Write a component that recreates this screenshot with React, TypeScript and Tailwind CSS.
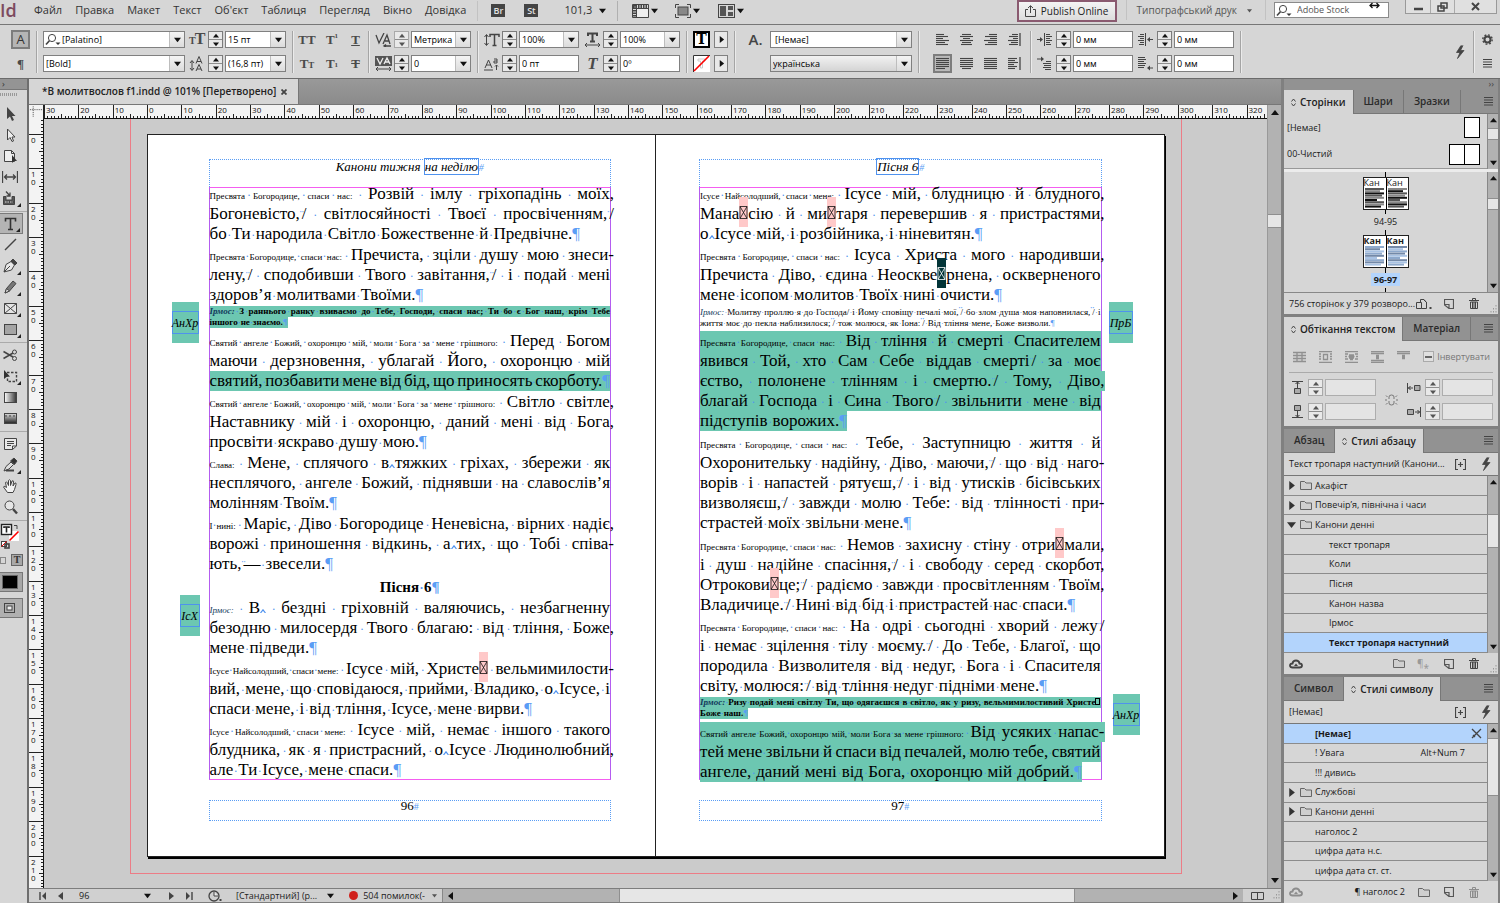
import { Fragment, type ReactNode } from "react";
import clsx from "clsx";

/* ── Page text ──
   |  ends the small lead-in      ¨  thin non-breaking space
   ^  zero-width break            □  glyph missing from the font
   ■  missing glyph, selected     ▯  missing glyph in small text */

type Para = {
  kind: "verse" | "irmos" | "title";
  lines: string[];
  marked?: number[];
  light?: boolean;
};

const leftText: Para[] = [
  { kind: "verse", lines: ["Пресвята Богородице, спаси нас:|Розвій імлу гріхопадінь моїх,", "Богоневісто,¨/ світлосяйності Твоєї просвіченням,¨/", "бо Ти народила Світло Божественне й Предвічне.¶"] },
  { kind: "verse", lines: ["Пресвята Богородице, спаси нас:|Пречиста, зціли душу мою знеси-", "лену,¨/ сподобивши Твого завітання,¨/ і подай мені", "здоров’я молитвами Твоїми.¶"] },
  { kind: "irmos", marked: [0, 1], lines: ["Ірмос:|З раннього ранку взиваємо до Тебе, Господи, спаси нас; Ти бо є Бог наш, крім Тебе", "іншого не знаємо.¶"] },
  { kind: "verse", marked: [2], lines: ["Святий ангеле Божий, охоронцю мій, моли Бога за мене грішного:|Перед Богом", "маючи дерзновення, ублагай Його, охоронцю мій", "святий, позбавити мене від бід, що приносять скорботу.¶"] },
  { kind: "verse", lines: ["Святий ангеле Божий, охоронцю мій, моли Бога за мене грішного:|Світло світле,", "Наставнику мій і охоронцю, даний мені від Бога,", "просвіти яскраво душу мою.¶"] },
  { kind: "verse", lines: ["Слава:|Мене, сплячого в^тяжких гріхах, збережи як", "несплячого, ангеле Божий, піднявши на славослів’я", "молінням Твоїм.¶"] },
  { kind: "verse", lines: ["І нині:|Маріє, Діво Богородице Неневісна, вірних надіє,", "ворожі приношення відкинь, а^тих, що Тобі співа-", "ють,¨— звесели.¶"] },
  { kind: "title", lines: ["Пісня 6¶"] },
  { kind: "verse", lines: ["Ірмос:|В^ бездні гріховній валяючись, незбагненну", "безодню милосердя Твого благаю: від тління, Боже,", "мене підведи.¶"] },
  { kind: "verse", lines: ["Ісусе Найсолодший, спаси мене:|Ісусе мій, Христе□ вельмимилости-", "вий, мене, що сповідаюся, прийми, Владико, о^Ісусе, і", "спаси мене, і від тління, Ісусе, мене вирви.¶"] },
  { kind: "verse", lines: ["Ісусе Найсолодший, спаси мене:|Ісусе мій, немає іншого такого", "блудника, як я пристрасний, о^Ісусе Людинолюбний,", "але Ти Ісусе, мене спаси.¶"] },
];

const rightText: Para[] = [
  { kind: "verse", lines: ["Ісусе Найсолодший, спаси мене:|Ісусе мій, блудницю й блудного,", "Мана□сію й ми□таря перевершив я пристрастями,", "о^Ісусе мій, і розбійника, і ніневитян.¶"] },
  { kind: "verse", lines: ["Пресвята Богородице, спаси нас:|Ісуса Христа мого народивши,", "Пречиста Діво, єдина Неоскве■рнена, оскверненого", "мене ісопом молитов Твоїх нині очисти.¶"] },
  { kind: "irmos", light: true, lines: ["Ірмос:|Молитву проллю я до Господа/ і Йому сповіщу печалі мої,¨/ бо злом душа моя наповнилася,¨/ і", "життя моє до пекла наблизилося;¨/ тож молюся, як Іона:¨/ Від тління мене, Боже визволи.¶"] },
  { kind: "verse", marked: [0, 1, 2, 3, 4], lines: ["Пресвята Богородице, спаси нас:|Від тління й смерті Спасителем", "явився Той, хто Сам Себе віддав смерті¨/ за моє", "єство, полонене тлінням і смертю.¨/ Тому, Діво,", "благай Господа і Сина Твого¨/ звільнити мене від", "підступів ворожих.¶"] },
  { kind: "verse", lines: ["Пресвята Богородице, спаси нас:|Тебе, Заступницю життя й", "Охоронительку надійну, Діво, маючи,¨/ що від наго-", "ворів і напастей рятуєш,¨/ і від утисків бісівських", "визволяєш,¨/ завжди молю Тебе: від тлінності при-", "страстей моїх звільни мене.¶"] },
  { kind: "verse", lines: ["Пресвята Богородице, спаси нас:|Немов захисну стіну отри□мали,", "і душ надійне спасіння,¨/ і свободу серед скорбот,", "Отрокови□це;¨/ радіємо завжди просвітленням Твоїм,", "Владичице.¨/ Нині від бід і пристрастей нас спаси.¶"] },
  { kind: "verse", lines: ["Пресвята Богородице, спаси нас:|На одрі сьогодні хворий лежу¨/", "і немає зцілення тілу моєму.¨/ До Тебе, Благої, що", "породила Визволителя від недуг, Бога і Спасителя", "світу, молюся:¨/ від тління недуг підніми мене.¶"] },
  { kind: "irmos", marked: [0, 1], lines: ["Ірмос:|Ризу подай мені світлу Ти, що одягаєшся в світло, як у ризу, вельмимилостивий Христе▯", "Боже наш.¶"] },
  { kind: "verse", marked: [0, 1, 2], lines: ["Святий ангеле Божий, охоронцю мій, моли Бога за мене грішного:|Від усяких напас-", "тей мене звільни й спаси від печалей, молю тебе, святий", "ангеле, даний мені від Бога, охоронцю мій добрий.¶"] },
];

function MissingGlyph({ selected }: { selected?: boolean }) {
  const ink = selected ? "#fff" : "#111";
  return (
    <svg viewBox="0 0 9 30" className="-mt-2 -mb-[2px] inline-block h-[30px] w-[9px] align-middle">
      <rect width="9" height="30" fill={selected ? "#023437" : "#ffc9c9"} />
      <path d="M1 9.5H8V21.5H1ZM1 9.5L8 21.5M8 9.5L1 21.5" fill="none" stroke={ink} strokeWidth="0.8" />
    </svg>
  );
}

function Word({ text }: { text: string }) {
  return (
    <>
      {text.split(/([□■▯^¨¶#])/).map((part, i) => {
        if (part === "□") return <MissingGlyph key={i} />;
        if (part === "■") return <MissingGlyph key={i} selected />;
        if (part === "▯") return <span key={i} className="inline-block h-[7px] w-[5px] border border-black" />;
        if (part === "^") return (
          <svg key={i} viewBox="0 0 6 4" className="inline-block h-1 w-[6px] align-baseline"><path d="M.5 4L3 .8L5.500 4" fill="none" stroke="#4f92ee" strokeWidth="1.2" /></svg>
        );
        if (part === "¨") return <span key={i} className="inline-block w-[2px] text-[12px] text-[#5a9df5]">¨</span>;
        if (part === "¶" || part === "#") return <span key={i} className="text-[#5a9df5]">{part}</span>;
        return <Fragment key={i}>{part}</Fragment>;
      })}
    </>
  );
}

const lineStyle = {
  verse: "h-5 text-[17px] leading-5",
  irmos: "h-[11px] text-[9px] leading-[11px]",
  title: "mt-[3px] h-5 justify-center text-[15px] leading-5 font-bold",
};

function TextLine({ text, kind, marked, light }: { text: string; kind: Para["kind"]; marked: boolean; light?: boolean }) {
  const [lead, main] = text.includes("|") ? text.split("|") : ["", text];
  const last = text.endsWith("¶");
  const words = [
    ...(lead ? lead.split(" ").map((w) => ({ w, small: true })) : []),
    ...main.split(" ").map((w) => ({ w, small: false })),
  ];
  return (
    <div
      className={clsx(
        "flex items-baseline whitespace-nowrap",
        lineStyle[kind],
        kind === "irmos" && !light && "font-bold",
        marked && "bg-[#6cc7b1]",
        last && kind !== "title" && "w-fit max-w-full",
        !last && /[,\-/]$/.test(text) && "-mr-1",
      )}
    >
      {words.map(({ w, small }, i) => (
        <Fragment key={i}>
          {i > 0 && (
            <span
              className={clsx(
                "flex min-w-0 justify-center text-[#4f92ee]",
                kind === "irmos" ? "text-[8px]" : "text-[12px]",
                last ? (kind === "irmos" ? "w-[3px]" : "w-[5px]") : small ? "w-0 grow" : "w-0 grow-2",
              )}
            >
              ·
            </span>
          )}
          <span
            className={clsx(
              "shrink-0",
              small && kind === "verse" && "text-[9px]",
              small && w.startsWith("Ірмос") && "italic text-[#123a5c]",
            )}
          >
            <Word text={w} />
          </span>
        </Fragment>
      ))}
    </div>
  );
}

function SideMark({ text, className }: { text: string; className: string }) {
  return (
    <div className={clsx("absolute flex h-[41px] items-center justify-center bg-[#6cc7b1]", className)}>
      <span className="flex h-[23px] w-full items-center justify-center border border-[#4f92ee] text-[12px] italic">
        {text}
      </span>
    </div>
  );
}

function DocPage({ heading, boxed, folio, paras, className, children }: {
  heading: string; boxed: string; folio: string; paras: Para[]; className: string; children: ReactNode;
}) {
  return (
    <article className={clsx("relative min-w-0 flex-1 bg-white pt-6 pb-[35px] font-['Liberation_Serif',serif] text-black", className)}>
      <header className="h-7 border border-b-0 border-dotted border-[#5a9df5] text-center text-[13px] leading-[14px] italic">
        {heading} <span className="border border-[#4f92ee]">{boxed}</span>
        <span className="text-[10px] text-[#5a9df5]">#</span>
      </header>
      <div className="h-[593px] border border-[#f45df0] border-x-[#b45cf0]">
        <div className="-mt-1">
          {paras.map((p, i) => (
            <div key={i} className={clsx(p.kind === "irmos" ? "mb-[3px]" : p.lines.length > 4 ? "mb-[2px]" : "mb-px")}>
              {p.lines.map((line, n) => (
                <TextLine key={n} text={line} kind={p.kind} light={p.light} marked={!!p.marked?.includes(n)} />
              ))}
            </div>
          ))}
        </div>
      </div>
      <footer className="mt-5 h-[21px] border border-dotted border-[#5a9df5] text-center text-[13px] leading-[9px]">
        {folio}<span className="text-[10px] text-[#5a9df5]">#</span>
      </footer>
      {children}
    </article>
  );
}

/* ── Rulers: 10 mm = 34.36 px at this zoom ── */

const MM = 3.436;
const range = (from: number, to: number) => Array.from({ length: to - from + 1 }, (_, i) => from + i);
const tickSize = (mm: number, full: number) => (mm % 10 === 0 ? full : mm % 5 === 0 ? 5 : 3);

const hTicks = range(-30, 330).map((mm) => `M${Math.round(103 + mm * MM) + 0.5} 14V${14 - tickSize(mm, 14)}`).join("");
const vTicks = range(-5, 225).map((mm) => `M15 ${Math.round(15 + mm * MM) + 0.5}H${15 - tickSize(mm, 15)}`).join("");

function TopRuler() {
  return (
    <svg className="h-[14px] w-full min-w-0 flex-1 bg-[#f3f3f3] font-['Open_Sans',sans-serif] text-[8px]">
      <path d={hTicks} stroke="#222" />
      {range(-3, 33).map((n) => (
        <text key={n} x={105 + n * 10 * MM} y="8" fill="#111">{Math.abs(n * 10)}</text>
      ))}
      <path d="M0 13.5H2000" stroke="#111" />
    </svg>
  );
}

function SideRuler() {
  return (
    <svg className="h-full w-[15px] shrink-0 bg-[#f3f3f3] font-['Open_Sans',sans-serif] text-[8px]">
      <path d={vTicks} stroke="#222" />
      {range(0, 21).map((n) =>
        String(n * 10).split("").map((d, i) => (
          <text key={`${n}-${i}`} x="2" y={24 + n * 10 * MM + i * 8} fill="#111">{d}</text>
        )),
      )}
      <path d="M14.5 0V2000" stroke="#111" />
    </svg>
  );
}

/* ── Small controls ── */

function Svg({ w = 16, h = 16, children, className }: { w?: number; h?: number; children: ReactNode; className?: string }) {
  return (
    <svg width={w} height={h} viewBox={`0 0 ${w} ${h}`} fill="none" stroke="#444" aria-hidden className={clsx("shrink-0", className)}>
      {children}
    </svg>
  );
}

function Tri({ dir = "down", size = 7, color = "#111" }: { dir?: "up" | "down" | "left" | "right"; size?: number; color?: string }) {
  const d = { up: "M0 6H8L4 1Z", down: "M0 2H8L4 7Z", left: "M6 0V8L1 4Z", right: "M2 0V8L7 4Z" }[dir];
  return (
    <svg width={size} height={size} viewBox="0 0 8 8" aria-hidden className="shrink-0"><path d={d} fill={color} /></svg>
  );
}

function Spin({ label, dim }: { label: string; dim?: boolean }) {
  const color = dim ? "#555" : "#111";
  return (
    <span className={clsx("flex h-[17px] w-[15px] shrink-0 flex-col border bg-[#e9e9e9]", dim ? "border-[#a9a9a9]" : "border-[#7c7c7c]")}>
      <button aria-label={`${label} +`} className="flex flex-1 items-center justify-center border-b border-[#8d8d8d]"><Tri dir="up" size={6} color={color} /></button>
      <button aria-label={`${label} −`} className="flex flex-1 items-center justify-center"><Tri size={6} color={color} /></button>
    </span>
  );
}

function Combo({ label, value, className, search, grey }: { label: string; value: string; className: string; search?: boolean; grey?: boolean }) {
  return (
    <label className={clsx("relative flex h-[17px] items-center border border-[#808080]", grey ? "bg-gradient-to-b from-[#f2f2f2] to-[#d4d4d4]" : "bg-white", className)}>
      {search && <SearchGlyph />}
      <select aria-label={label} defaultValue={value} className={clsx("h-full w-full appearance-none bg-transparent text-[9px] leading-[15px] text-black outline-none", search ? "pl-px" : "pl-[2px]")}>
        <option>{value}</option>
      </select>
      <span className="pointer-events-none absolute inset-y-0 right-0 flex w-[15px] items-center justify-center border-l border-[#bdbdbd] bg-gradient-to-b from-[#f4f4f4] to-[#dcdcdc]"><Tri size={7} /></span>
    </label>
  );
}

function Field({ label, value = "", className, dim }: { label: string; value?: string; className?: string; dim?: boolean }) {
  return (
    <input
      aria-label={label}
      defaultValue={value}
      className={clsx("h-[17px] min-w-0 border px-[2px] text-[9px] text-black outline-none", dim ? "border-[#adadad] bg-[#e4e4e4]" : "border-[#808080] bg-white", className)}
    />
  );
}

function SearchGlyph() {
  return (
    <Svg w={16} h={13} className="ml-px">
      <circle cx="7" cy="5" r="3.6" /><path d="M4.4 7.7L1 11.5" strokeWidth="1.6" /><path d="M10.5 9.5h5l-2.500 2.500z" fill="#333" stroke="none" />
    </Svg>
  );
}

const Sep = () => <span className="mx-[6px] h-[42px] w-px shrink-0 bg-[#a5a5a5] shadow-[1px_0_0_#ebebeb]" />;
const Pair = ({ children }: { children: ReactNode }) => <div className="flex shrink-0 flex-col gap-[7px]">{children}</div>;
const Row = ({ children, className }: { children: ReactNode; className?: string }) => <div className={clsx("flex h-[17px] items-center", className ?? "gap-[2px]")}>{children}</div>;

function GlyphButton({ label, children, className }: { label: string; children: ReactNode; className?: string }) {
  return (
    <button aria-label={label} className={clsx("flex h-[17px] items-center justify-center font-['Liberation_Serif',serif] leading-none font-bold text-[#4a4a4a]", className)}>
      {children}
    </button>
  );
}

/* text-alignment bars: each entry is [start, end] of one bar */
const aligns: Record<string, { bars: number[][]; edge?: boolean }> = {
  "За лівим краєм": { bars: [[0, 8], [0, 12], [0, 7], [0, 13], [0, 9], [0, 12]] },
  "За центром": { bars: [[2, 11], [0, 13], [3, 10], [0, 13], [2, 11], [1, 12]] },
  "За правим краєм": { bars: [[5, 13], [1, 13], [6, 13], [0, 13], [4, 13], [1, 13]] },
  "До корінця": { bars: [[4, 10], [1, 10], [5, 10], [0, 10], [3, 10], [1, 10]], edge: true },
  "За шириною, останній ліворуч": { bars: [[0, 13], [0, 13], [0, 13], [0, 13], [0, 13], [0, 9]] },
  "За шириною, останній по центру": { bars: [[0, 13], [0, 13], [0, 13], [0, 13], [0, 13], [2, 11]] },
  "За шириною": { bars: [[0, 13], [0, 13], [0, 13], [0, 13], [0, 13], [0, 13]] },
  "Від корінця": { bars: [[0, 9], [0, 7], [0, 10], [0, 6], [0, 9], [0, 7]], edge: true },
};

function AlignButton({ name, active }: { name: string; active?: boolean }) {
  const { bars, edge } = aligns[name];
  return (
    <button aria-label={name} className={clsx("flex h-[19px] w-[19px] items-center justify-center", active && "border-2 border-[#7d7d7d] bg-[#b9b9b9]")}>
      <Svg w={13} h={13}>
        {bars.map(([a, b], i) => <path key={i} d={`M${a} ${i * 2 + 1.5}H${b}`} strokeWidth="1.1" />)}
        {edge && <path d="M12 0V13" strokeWidth="1.3" />}
      </Svg>
    </button>
  );
}

function IndentIcon({ flip, low }: { flip?: boolean; low?: boolean }) {
  const up = low && !flip;
  return (
    <Svg w={15} h={15} className={flip ? "-scale-x-100" : ""}>
      {!low && <><path d="M0 7.500H4" /><path d="M3 5L6 7.500L3 10Z" fill="#444" stroke="none" /><path d="M7.500 1V14M9 2.500H13M9 4.500H15M9 6.500H13M9 8.500H15M9 10.500H13M9 12.500H14" /></>}
      {up && <><path d="M0 3H5" /><path d="M4 .5L7 3L4 5.500Z" fill="#444" stroke="none" /><path d="M9 5.500H14M6 7.500H14M7 9.500H14M6 11.500H14M8 13.500H14" /></>}
      {low && flip && <><path d="M0 12H4" /><path d="M3 9.500L6 12L3 14.500Z" fill="#444" stroke="none" /><path d="M8 1.500H15M7 3.500H15M9 5.500H15M7 7.500H15M8 9.500H15M9 11.500H15" /></>}
    </Svg>
  );
}

/* ── Top bars ── */

const menus = ["Файл", "Правка", "Макет", "Текст", "Об'єкт", "Таблиця", "Перегляд", "Вікно", "Довідка"];

function MenuBar() {
  return (
    <header className="flex h-[25px] shrink-0 items-start overflow-hidden border-b border-[#777] bg-[#d6d6d6] text-[11px] text-[#333]">
      <span className="w-[34px] text-[18px] leading-5 font-semibold text-[#7d4a5f]">Id</span>
      <nav className="flex h-[21px] items-center gap-[13px]">
        {menus.map((m) => <button key={m}>{m}</button>)}
      </nav>
      <div className="ml-[11px] flex h-[21px] items-center">
        <span className="h-5 w-px bg-[#c2c2c2]" />
        <button className="ml-[13px] h-[13px] w-[14px] bg-[#444] text-[9px] leading-[13px] font-semibold text-[#e2e2e2]">Br</button>
        <button className="ml-[19px] h-[13px] w-[14px] bg-[#444] text-[9px] leading-[13px] font-semibold text-[#e2e2e2]">St</button>
        <button className="ml-[26px] flex items-center gap-[7px]">101,3 <Tri /></button>
        <span className="ml-[11px] h-5 w-px bg-[#b0b0b0]" />
        <button aria-label="Параметри перегляду" className="ml-[14px] flex items-center gap-[2px]">
          <Svg w={17} h={14}><path d="M.5 .5H16.500V13.500H.5ZM5 4.500H16M4.500 4V13" /><path d="M1 2.500H16M2.500 1V13" strokeWidth="3" strokeDasharray="1.500 1" /><path d="M5 5H16V13H5Z" fill="#eee" stroke="none" /></Svg><Tri size={7} />
        </button>
        <button aria-label="Режим екрана" className="ml-[17px] flex items-center gap-[2px]">
          <Svg w={16} h={14}><rect x="3" y="3" width="10" height="8" fill="#888" /><path d="M.5 4V.5H4M12 .5H15.500V4M15.500 10V13.500H12M4 13.500H.5V10" /></Svg><Tri size={7} />
        </button>
        <button aria-label="Упорядкувати документи" className="ml-[18px] flex items-center gap-[2px]">
          <Svg w={17} h={14}><rect x=".5" y=".5" width="16" height="13" /><path d="M2 2H8V12H2ZM10 2H15V6H10ZM10 8H15V12H10Z" fill="#555" stroke="none" /></Svg><Tri size={7} />
        </button>
      </div>
      <div className="ml-auto flex items-start">
        <button className="flex h-[22px] w-[100px] items-center justify-center gap-[5px] border-2 border-[#8a5a70] bg-gradient-to-b from-[#f4f4f4] to-[#dcdcdc] text-[10px] text-[#222]">
          <Svg w={11} h={12}><path d="M3 4.500H.5V11.500H10.500V4.500H8M5.500 8V1M3 3L5.500 .700L8 3" /></Svg>
          Publish Online
        </button>
        <span className="ml-[9px] h-5 w-px bg-[#c2c2c2]" />
        <button className="ml-[10px] flex h-[21px] items-center gap-[10px] text-[10px] text-[#555]">Типографський друк <Tri size={5} color="#555" /></button>
        <span className="ml-[13px] h-5 w-px bg-[#c2c2c2]" />
        <label className="relative mt-[2px] ml-[8px] flex h-4 w-[115px] items-center border border-[#8a8a8a] bg-white">
          <SearchGlyph />
          <input aria-label="Пошук" placeholder="Adobe Stock" className="w-full min-w-0 bg-transparent pl-[5px] text-[9px] text-[#333] outline-none placeholder:text-[#555]" />
          <Svg w={11} h={7} className="absolute -top-px right-[8px]"><path d="M1 3.500H10M3.500 1L1 3.500L3.500 6M7.500 1L10 3.500L7.500 6" stroke="#111" strokeWidth="1.300" /></Svg>
        </label>
        <div className="mr-[3px] ml-[16px] flex h-[14px] border border-t-0 border-[#999] bg-[#e0e0e0]">
          <button aria-label="Згорнути" className="flex w-[25px] items-center justify-center border-r border-[#aaa]"><Svg w={9} h={10}><path d="M0 7H9" strokeWidth="2.500" /></Svg></button>
          <button aria-label="Відновити" className="flex w-[24px] items-center justify-center border-r border-[#aaa]"><Svg w={11} h={10}><path d="M4 1H10V6H4ZM1 4H7V9H1Z" strokeWidth="1.500" /></Svg></button>
          <button aria-label="Закрити" className="flex w-[41px] items-center justify-center"><Svg w={9} h={9}><path d="M1 1L8 8M8 1L1 8" strokeWidth="2" /></Svg></button>
        </div>
      </div>
    </header>
  );
}

function ControlBar() {
  const names = Object.keys(aligns);
  return (
    <section className="flex h-[54px] shrink-0 items-center overflow-hidden border-b border-[#6b6b6b] bg-[#d6d6d6] pr-[6px] pl-[11px]">
      <Pair>
        <button aria-label="Символ" className="-my-px flex h-[19px] w-[19px] items-center justify-center border-2 border-[#7d7d7d] bg-[#b5b5b5] text-[13px] leading-none text-[#333]">A</button>
        <GlyphButton label="Абзац" className="text-[13px]">¶</GlyphButton>
      </Pair>
      <Sep />
      <Pair>
        <Combo label="Шрифт" value="[Palatino]" className="w-[142px]" search />
        <Combo label="Накреслення" value="[Bold]" className="w-[142px]" />
      </Pair>
      <div className="ml-1"><Pair>
        <Row><span className="flex w-[17px] items-baseline font-['Liberation_Serif',serif] font-bold text-[#4a4a4a]"><span className="text-[10px]">T</span><span className="-ml-px text-[16px] leading-none">T</span></span><Spin label="Кегль" /><Combo label="Кегль" value="15 пт" className="w-[61px]" /></Row>
        <Row>
          <Svg w={17} h={16}><path d="M3 5V14M1 7L3 4.500L5 7M1 12L3 14.500L5 12" /><path d="M7 7.500L10 .500L13 7.500M8 5.500H12M7 15L10 8.500L13 15M8 13H12" /></Svg>
          <Spin label="Інтерліньяж" /><Combo label="Інтерліньяж" value="(16,8 пт)" className="w-[61px]" />
        </Row>
      </Pair></div>
      <Sep />
      <Pair>
        <Row className="gap-[9px] text-[13px]"><GlyphButton label="Усі великі" className="w-4">TT</GlyphButton><GlyphButton label="Верхній індекс" className="w-4">T<sup className="text-[7px]">1</sup></GlyphButton><GlyphButton label="Підкреслення" className="w-[13px] underline">T</GlyphButton></Row>
        <Row className="gap-[9px] text-[13px]"><GlyphButton label="Капітель" className="w-4">T<span className="pt-[3px] text-[9px]">T</span></GlyphButton><GlyphButton label="Нижній індекс" className="w-4">T<sub className="text-[7px]">1</sub></GlyphButton><GlyphButton label="Закреслення" className="w-[13px] line-through">T</GlyphButton></Row>
      </Pair>
      <Sep />
      <Pair>
        <Row><Svg w={17} h={14}><path d="M1 2L4 10L9 0M8 11L12 2L15 11M10 8H14M16 13H9M11 11.500L9 13L11 14" strokeWidth="1.300" /></Svg><Spin label="Кернінг" dim /><Combo label="Кернінг" value="Метрика" className="w-[60px]" /></Row>
        <Row><Svg w={17} h={15}><rect width="17" height="10" fill="#555" stroke="none" /><path d="M2 2L5 8L8 2M9 8L12 2L15 8M10 6H14" stroke="#eee" strokeWidth="1.300" /><path d="M1 13H16M3 11L1 13L3 15M14 11L16 13L14 15" /></Svg><Spin label="Трекінг" /><Combo label="Трекінг" value="0" className="w-[60px]" /></Row>
      </Pair>
      <Sep />
      <Pair>
        <Row><Svg w={16} h={14}><path d="M2.500 2V12M.5 4L2.500 1.500L4.500 4M.5 10L2.500 12.500L4.500 10" /><path d="M6 4V1.500H15V4M10.500 1.500V12.500M8.500 12.500H12.500" strokeWidth="1.500" /></Svg><Spin label="Масштаб по вертикалі" /><Combo label="Масштаб по вертикалі" value="100%" className="w-[60px]" /></Row>
        <Row><Svg w={16} h={14}><path d="M1 11L4.500 3L8 11M2 8H7M0 13H9M10 2H13V6H10V4H13M12.500 13V8M11 9.500L12.500 8L14 9.500" /></Svg><Spin label="Зсув базової лінії" /><Field label="Зсув базової лінії" value="0 пт" className="w-[60px]" /></Row>
      </Pair>
      <div className="ml-[5px]"><Pair>
        <Row><Svg w={17} h={15}><path d="M4 4V1.500H13V4M8.500 1.500V9.500M6 9.500H11" strokeWidth="2" /><path d="M1 13H16M3 11L1 13L3 15M14 11L16 13L14 15" /></Svg><Spin label="Масштаб по горизонталі" /><Combo label="Масштаб по горизонталі" value="100%" className="w-[60px]" /></Row>
        <Row><span className="w-[17px] text-center font-['Liberation_Serif',serif] text-[17px] leading-none font-bold text-[#4a4a4a] italic">T</span><Spin label="Нахил" /><Field label="Нахил" value="0º" className="w-[60px]" /></Row>
      </Pair></div>
      <Sep />
      <Pair>
        <Row><button aria-label="Заливка" className="h-[17px] w-[17px] border-2 border-black bg-white text-center font-['DejaVu_Serif',serif] text-[14px] leading-[13px] font-bold">T</button><button aria-label="Вибір заливки" className="ml-[2px] flex h-[17px] w-[14px] items-center justify-center border border-[#808080] bg-[#e8e8e8]"><Tri dir="right" size={7} /></button></Row>
        <Row><button aria-label="Обведення" className="flex h-[17px] w-[17px] items-center justify-center bg-white"><Svg w={17} h={17}><path d="M17 .5H.5V17" stroke="#333" /><path d="M5 4H12V6H9.500V13H7.500V6H5Z" stroke="#ccc" /><path d="M1 16L16 1" stroke="#f00" strokeWidth="1.600" /></Svg></button><button aria-label="Вибір обведення" className="ml-[2px] flex h-[17px] w-[14px] items-center justify-center border border-[#808080] bg-[#e8e8e8]"><Tri dir="right" size={7} /></button></Row>
      </Pair>
      <Sep />
      <div className="flex h-[42px] w-[29px] shrink-0 justify-center text-[15px] leading-[17px] font-semibold text-[#444]">A.</div>
      <Pair>
        <Combo label="Стиль символу" value="[Немає]" className="w-[142px] pl-[2px]" />
        <Combo label="Мова" value="українська" className="w-[142px]" grey />
      </Pair>
      <Sep />
      <div className="ml-2"><Pair>
        <Row className="gap-[5px]">{names.slice(0, 4).map((n) => <AlignButton key={n} name={n} />)}</Row>
        <Row className="gap-[5px]">{names.slice(4).map((n, i) => <AlignButton key={n} name={n} active={i === 0} />)}</Row>
      </Pair></div>
      <Sep />
      <Pair>
        <Row><IndentIcon /><span /><Spin label="Відступ ліворуч" /><Field label="Відступ ліворуч" value="0 мм" className="w-[60px]" /></Row>
        <Row><IndentIcon low /><span /><Spin label="Відступ першого рядка" /><Field label="Відступ першого рядка" value="0 мм" className="w-[60px]" /></Row>
      </Pair>
      <div className="ml-[5px]"><Pair>
        <Row><IndentIcon flip /><span /><Spin label="Відступ праворуч" /><Field label="Відступ праворуч" value="0 мм" className="w-[60px]" /></Row>
        <Row><IndentIcon flip low /><span /><Spin label="Відступ останнього рядка" /><Field label="Відступ останнього рядка" value="0 мм" className="w-[60px]" /></Row>
      </Pair></div>
      <Sep />
      <button aria-label="Швидке застосування" className="ml-auto"><Bolt /></button>
      <span className="w-[2px]" />
      <Sep />
      <Pair>
        <GlyphButton label="Налаштувати" className="w-[14px]"><Svg w={11} h={11}><circle cx="5.500" cy="5.500" r="3" strokeWidth="2" /><circle cx="5.500" cy="5.500" r="4.700" strokeWidth="1.400" strokeDasharray="1.850 1.840" /></Svg></GlyphButton>
        <GlyphButton label="Меню панелі" className="w-[14px]"><Burger /></GlyphButton>
      </Pair>
    </section>
  );
}

const Bolt = () => <Svg w={10} h={14}><path d="M6 .5L1.500 7.500H5L2.500 13.500L9 5.500H5.500L8 .5" fill="#444" strokeWidth=".8" /></Svg>;
const Burger = () => <Svg w={9} h={9}><path d="M0 .5H9M0 3H9M0 5.500H9M0 8H9" strokeWidth="1.100" /></Svg>;

/* ── Tools ── */

const toolGroups: { name: string; more?: boolean; active?: boolean; icon: ReactNode }[][] = [
  [
    { name: "Виділення", icon: <path d="M5 1V13L8 10.500L10 15L12 14L10 10H13.500Z" fill="#444" stroke="none" /> },
    { name: "Пряме виділення", icon: <path d="M5.500 2V13L8 10.500L10 14.500L11.500 14L10 10H13Z" fill="#eee" /> },
    { name: "Сторінка", icon: <><path d="M2.500 2.500H9.500L12.500 5.500V13.500H2.500Z" fill="#eee" /><path d="M9.500 2.500V5.500H12.500" /><path d="M10 7V15L12 13L15 13Z" fill="#333" stroke="none" /></> },
    { name: "Проміжок", icon: <path d="M.5 2V14M15.500 2V14M3 8H13M5 5.500L2.500 8L5 10.500M11 5.500L13.500 8L11 10.500" strokeWidth="1.300" /> },
    { name: "Збирання вмісту", more: true, icon: <><path d="M1.500 6.500V14.500H12.500V6.500H10V10H4V6.500Z" fill="#555" /><path d="M4 1.500L8 6M8 2.500V6H4.500M6 12H12" strokeWidth="1.300" /><path d="M3 12H11" stroke="#ddd" strokeDasharray="1.500 1" /></> },
  ],
  [
    { name: "Текст", more: true, active: true, icon: <path d="M3.500 5.500V2.500H13.500V5.500M8.500 2.500V13.500M6 13.500H11" strokeWidth="1.600" stroke="#333" /> },
    { name: "Лінія", icon: <path d="M3 13L14 2" strokeWidth="1.400" /> },
    { name: "Перо", more: true, icon: <><path d="M2 14L4 6.500L9 3.500L12.500 7L9.500 12Z" fill="#e8e8e8" /><path d="M9 3L11 1L15 5L13 7ZM2 14L8 8" fill="#444" /></> },
    { name: "Олівець", more: true, icon: <><path d="M3 14L4.500 9.500L11 2L14 4.500L7.500 12Z" fill="#777" /><path d="M3 14L4.500 9.500L7.500 12Z" fill="#ddd" /></> },
    { name: "Прямокутний фрейм", more: true, icon: <path d="M2.500 3.500H14.500V13.500H2.500ZM2.500 3.500L14.500 13.500M14.500 3.500L2.500 13.500" fill="#e4e4e4" /> },
    { name: "Прямокутник", more: true, icon: <rect x="2.500" y="3.500" width="12" height="10" fill="#a4a4a4" /> },
  ],
  [
    { name: "Ножиці", icon: <><circle cx="12.500" cy="5" r="2" /><circle cx="12.500" cy="11.500" r="2" /><path d="M1.500 4.500L11 10M1.500 11.500L11 6" strokeWidth="1.500" /></> },
    { name: "Вільне перетворення", more: true, icon: <><path d="M5 4.500H14.500V13.500H5.500V9" strokeDasharray="2.500 1.500" strokeWidth="1.400" /><path d="M2 2V11L4.500 9L8 8.500Z" fill="#333" stroke="none" /></> },
    { name: "Градієнт", icon: <><rect x="2.500" y="3.500" width="12" height="10" fill="url(#grad)" /><defs><linearGradient id="grad"><stop stopColor="#fff" /><stop offset="1" stopColor="#333" /></linearGradient></defs></> },
    { name: "Розмиття градієнта", icon: <><rect x="2.500" y="3.500" width="12" height="10" fill="url(#feather)" /><path d="M3 6H14" strokeDasharray="2 2" stroke="#777" strokeWidth="2" /><defs><linearGradient id="feather" x2="0" y2="1"><stop stopColor="#ddd" /><stop offset="1" stopColor="#222" /></linearGradient></defs></> },
  ],
  [
    { name: "Примітка", icon: <><path d="M2.500 2.500H14.500V10L10.500 13.500H2.500Z" fill="#e8e8e8" /><path d="M5 5.500H12M5 7.500H12M5 9.500H9M10.500 13.500V10H14.500" /></> },
    { name: "Піпетка", more: true, icon: <><path d="M2 14L4 9.500L9 5L11.500 7.500L7 12Z" fill="#ddd" /><path d="M8.500 4L12 1L15 4L12.500 7.500Z" fill="#333" /><path d="M4 13.500H12" strokeWidth="2" /></> },
    { name: "Рука", icon: <path d="M5.500 14.500L1.500 9Q1.500 7.500 4 9L4.500 9.500L3.500 4.500Q4.500 3 5.500 5L6.500 7.500V2.500Q7.500 1 8.500 2.500V7.500L10 3Q11.500 2 11.500 4L11 8L13 5Q14.500 4.500 14 6.500L12.500 11.500L11 14.500Z" fill="#f2f2f2" /> },
    { name: "Масштаб", icon: <><circle cx="7.500" cy="6.500" r="4.500" fill="#e6e6e6" /><path d="M11 10L15 14.500" strokeWidth="2.400" /></> },
  ],
];

function ToolBar() {
  return (
    <aside className="flex w-[28px] shrink-0 flex-col border-r border-[#6e6e6e] bg-[#d6d6d6]">
      <div className="h-[11px] border-b border-[#777] bg-[#949494] pl-[2px] text-[9px] leading-[9px] text-[#333]">›</div>
      <div className="mt-[3px] mb-[7px] h-[3px] w-[18px] bg-[repeating-linear-gradient(90deg,#999_0_1px,transparent_1px_2px)]" />
      {toolGroups.map((group, g) => (
        <div key={g} className={clsx("flex flex-col", g > 0 && "mt-[3px] border-t border-[#aaa] pt-px")}>
          {group.map((t) => (
            <button key={t.name} aria-label={t.name} className={clsx("relative h-[21px] w-[23px] pl-[2px]", t.active && "border border-l-0 border-[#7b7b7b] bg-[#b4b4b4]")}>
              <Svg>{t.icon}</Svg>
              {t.more && <Svg w={4} h={4} className="absolute right-[2px] bottom-px"><path d="M4 0V4H0Z" fill="#222" stroke="none" /></Svg>}
            </button>
          ))}
        </div>
      ))}
      <div className="mt-[3px] flex flex-col items-start border-t border-[#aaa] pt-[2px]">
        <button aria-label="Заливка й обведення" className="h-[27px]">
          <Svg w={20} h={27}>
            <rect x="9" y="8" width="10" height="10" fill="#fff" stroke="none" /><path d="M9.500 17.500L18.500 8.500" stroke="#f00" strokeWidth="1.600" />
            <rect x="1.500" y="1.500" width="10" height="10" fill="#fff" stroke="#222" strokeWidth="1.400" /><path d="M4 5V4H9V5M6.500 4V9.500" stroke="#222" strokeWidth="1.600" />
            <path d="M14 2.500H17V6" /><rect x="1.500" y="18.500" width="5" height="5" fill="#fff" /><path d="M1.500 23.500L6.500 18.500" stroke="#f00" /><rect x="5" y="21" width="4" height="4" strokeWidth="1.600" />
          </Svg>
        </button>
        <div className="mt-[4px] flex gap-[5px]">
          <button aria-label="Форматування контейнера" className="mt-[3px] h-[7px] w-[6px] border border-[#888]" />
          <button aria-label="Форматування тексту" className="h-[12px] w-3 border border-[#666] bg-[#a8a8a8] font-['Liberation_Serif',serif] text-[10px] leading-[10px] font-bold text-[#333]">T</button>
        </div>
        <button aria-label="Застосувати колір" className="mt-[6px] flex h-5 w-[23px] items-center border border-l-0 border-[#777] bg-[#a6a6a6] pl-[2px]"><span className="h-[14px] w-4 border border-[#666] bg-black" /></button>
        <button aria-label="Режим перегляду" className="mt-[6px] flex h-5 w-[23px] items-center border border-l-0 border-[#777] bg-[#b0b0b0] pl-[3px]"><Svg w={13} h={12}><rect x="1.500" y="1.500" width="10" height="9" /><rect x="4" y="4" width="5" height="4" fill="#eee" /></Svg></button>
      </div>
    </aside>
  );
}

/* ── Document window ── */

function StatusBar() {
  return (
    <footer className="flex h-[15px] shrink-0 items-center border-y border-[#7d7d7d] bg-[#d0d0d0] text-[9px] leading-[13px] text-[#222]">
      <button aria-label="Перша сторінка" className="ml-[10px]"><Svg w={8} h={8}><path d="M1 0V8" strokeWidth="1.400" /><path d="M7 0V8L3 4Z" fill="#444" stroke="none" /></Svg></button>
      <button aria-label="Попередня сторінка" className="ml-[10px]"><Tri dir="left" size={8} color="#444" /></button>
      <input aria-label="Сторінка" defaultValue="96" className="ml-[14px] w-[65px] bg-transparent outline-none" />
      <Tri size={7} />
      <button aria-label="Наступна сторінка" className="ml-[16px]"><Tri dir="right" size={8} color="#444" /></button>
      <button aria-label="Остання сторінка" className="ml-[10px]"><Svg w={8} h={8}><path d="M7 0V8" strokeWidth="1.400" /><path d="M1 0V8L5 4Z" fill="#444" stroke="none" /></Svg></button>
      <Svg w={14} h={12} className="ml-[15px]"><circle cx="6" cy="6" r="5" strokeWidth="1.300" /><path d="M6 2V6H10" fill="#eee" /><path d="M12.500 9V11" strokeWidth="2" /></Svg>
      <button className="ml-[14px] flex items-center gap-[10px]">[Стандартний] (р... <Tri size={7} /></button>
      <span className="ml-[15px] h-[9px] w-[9px] rounded-full bg-[#d0211c]" />
      <button className="ml-[5px] flex w-[74px] items-center justify-between"><span className="w-[62px] overflow-hidden text-left whitespace-nowrap">504 помилок(-и</span><Tri size={5} color="#555" /></button>
      <div className="ml-[5px] flex h-full min-w-0 flex-1 items-center border-l border-[#888] bg-[#b2b2b2]">
        <span className="px-[4px]"><Tri dir="left" size={8} /></span>
        <span className="ml-[20%] h-full w-[57%] border-x border-[#8f8f8f] bg-[#e6e6e6]" />
        <span className="ml-auto px-[4px]"><Tri dir="right" size={8} /></span>
      </div>
      <Svg w={13} h={10} className="mx-[8px]"><path d="M.5 1.500H12.500V8.500H.5ZM6.500 1.500V8.500" /></Svg>
      <Grip />
    </footer>
  );
}

const Grip = () => <Svg w={9} h={9}><path d="M7 0V9M4.500 3V9M2 6V9" stroke="#999" strokeDasharray="1.500 1.500" /></Svg>;

function DocumentWindow() {
  return (
    <main className="flex min-w-0 flex-1 flex-col border-l border-[#6e6e6e]">
      <div className="flex h-[26px] shrink-0 border-b border-[#777] bg-gradient-to-b from-[#999] to-[#8b8b8b]">
        <div className="flex items-center border-r border-[#777] bg-[#d6d6d6] pr-[11px] pl-[13px] text-[10px] font-semibold text-[#222]">
          *В молитвослов f1.indd @ 101% [Перетворено]
          <button aria-label="Закрити вкладку" className="ml-[5px]"><Svg w={6} h={6}><path d="M.5 .5L5.500 5.500M5.500 .5L.5 5.500" strokeWidth="1.800" /></Svg></button>
        </div>
      </div>
      <div className="flex min-h-0 flex-1">
        <div className="flex min-w-0 flex-1 flex-col">
          <div className="flex h-[14px] shrink-0">
            <Svg w={15} h={14} className="border-r border-[#222] bg-[#f3f3f3]"><path d="M4.500 1V13M1 4.500H14" strokeDasharray="1 1" /></Svg>
            <TopRuler />
          </div>
          <div className="flex min-h-0 flex-1">
            <SideRuler />
            <div className="min-w-0 flex-1 overflow-hidden bg-[#cbcbcb]">
              <div className="mx-auto w-[1052px] border border-t-0 border-[#ec7c86] px-4 pt-[15px] pb-4">
                <div className="flex border border-[#222] shadow-[1px_2px_0_#000]">
                  <DocPage heading="Канони тижня" boxed="на неділю" folio="96" paras={leftText} className="pr-[44px] pl-[61px]">
                    <SideMark text="АнХр" className="top-[167px] left-[24px] w-[27px]" />
                    <SideMark text="ІсХ" className="top-[460px] left-[32px] w-[20px]" />
                  </DocPage>
                  <DocPage heading="" boxed="Пісня 6" folio="97" paras={rightText} className="border-l border-[#222] pr-[62px] pl-[43px]">
                    <SideMark text="ПрБ" className="top-[167px] right-[31px] w-[24px]" />
                    <SideMark text="АнХр" className="top-[559px] right-[24px] w-[27px]" />
                  </DocPage>
                </div>
              </div>
            </div>
          </div>
        </div>
        <div className="flex w-[14px] shrink-0 flex-col items-center border-l border-[#999] bg-[#b2b2b2] py-[4px]">
          <Tri dir="up" size={8} />
          <span className="mt-[97px] h-[14px] w-full border-y border-[#8f8f8f] bg-[#e6e6e6]" />
          <span className="mt-auto"><Tri size={8} /></span>
        </div>
      </div>
      <StatusBar />
    </main>
  );
}

/* ── Panels ── */

function Tabs({ tabs, active }: { tabs: string[]; active: string }) {
  return (
    <div className="flex h-[24px] bg-[#929292] text-[10px] font-semibold text-[#2a2a2a]">
      {tabs.map((t) => (
        <button key={t} className={clsx("flex items-center gap-[4px] border-r border-[#777]", t === active ? "bg-[#d6d6d6] px-[7px] text-[#222]" : "border-b px-[10px]")}>
          {t === active && <Svg w={5} h={9}><path d="M.5 3.500L2.500 1L4.500 3.500M.5 5.500L2.500 8L4.500 5.500" /></Svg>}
          {t}
        </button>
      ))}
      <button aria-label="Меню панелі" className="flex flex-1 items-center justify-end border-b border-[#777] pr-[5px]"><Burger /></button>
    </div>
  );
}

function Scroller({ className }: { className: string }) {
  return (
    <div className="flex w-[11px] shrink-0 flex-col items-center border-l border-[#888] bg-[#b2b2b2] py-[3px]">
      <Tri dir="up" size={7} />
      <span className={clsx("w-full border-y border-[#8f8f8f] bg-[#e6e6e6]", className)} />
      <span className="mt-auto"><Tri size={7} /></span>
    </div>
  );
}

const FolderIcon = () => <Svg w={13} h={11}><path d="M.5 9.500V1.500H4.500L6 3H11.500V9.500Z" fill="#cfcfcf" stroke="#666" /></Svg>;
const TrashIcon = ({ dim }: { dim?: boolean }) => <Svg w={10} h={11} className={dim ? "opacity-50" : ""}><path d="M0 2.500H10M3.500 2V.5H6.500V2M1.500 4H8.500V10.500H1.500ZM3.500 4V10M5 4V10M6.500 4V10" /></Svg>;
const NewIcon = () => <Svg w={10} h={10}><path d="M.5 .5H9.500V9.500H5L.5 6ZM.5 5.500H5V9" stroke="#555" strokeWidth="1.200" /></Svg>;
const CloudIcon = ({ dim }: { dim?: boolean }) => <Svg w={14} h={10} className={dim ? "opacity-50" : ""}><path d="M3.500 8.500Q1 8.500 1 6.500Q1 4.500 3.500 4.500Q4 1.500 7 1.500Q10 1.500 10.500 4.500Q13 4.500 13 6.500Q13 8.500 10.500 8.500Z" strokeWidth="1.800" /><path d="M5 7L7 4.500L9 7Z" fill="#444" stroke="none" /></Svg>;

function Thumb({ current }: { current?: boolean }) {
  return (
    <div className="flex border border-[#222]">
      {[0, 1].map((side) => (
        <div key={side} className={clsx("h-[31px] w-[22px] overflow-hidden bg-white text-[9px] leading-[10px]", side === 1 && "border-l border-black", current && "font-bold")}>
          Кан
          <Svg w={19} h={20} className="mx-px">
            {range(0, 8).map((i) => (
              <path key={i} d={`M0 ${i * 2.2 + 1}H${[19, 15, 19, 17, 19, 12, 19, 19, 16][i]}`} strokeWidth="2" stroke={current ? ["#8ea9cc", "#7389a8", "#a9c3e4"][(i + side) % 3] : ["#555", "#888", "#111"][(i + side) % 3]} />
            ))}
          </Svg>
        </div>
      ))}
    </div>
  );
}

function PagesPanel() {
  return (
    <section className="bg-[#d6d6d6]">
      <Tabs tabs={["Сторінки", "Шари", "Зразки"]} active="Сторінки" />
      <div className="flex h-[55px]">
        <div className="flex-1 pr-[7px] pl-[3px]">
          <div className="flex h-[27px] items-center justify-between">[Немає]<span className="h-[21px] w-[16px] border border-black bg-white" /></div>
          <div className="flex h-[26px] items-center justify-between">00-Чистий<span className="flex h-[21px] w-[31px] border border-black bg-white"><span className="w-1/2 border-r border-black" /></span></div>
        </div>
        <Scroller className="mt-[4px] h-[12px]" />
      </div>
      <div className="flex h-[123px] border-t-[3px] border-[#ececec] shadow-[0_-1px_0_#999]">
        <div className="flex flex-1 flex-col items-center">
          <span className="h-[5px] w-px bg-black" />
          <Thumb />
          <span className="h-[4px] w-px bg-black" />
          <span className="leading-[16px]">94-95</span>
          <span className="h-[5px] w-px bg-black" />
          <Thumb current />
          <span className="h-[5px] w-px bg-black" />
          <span className="bg-[#b3d4fc] px-[3px] leading-[13px] font-bold">96-97</span>
          <span className="mt-[2px] w-px flex-1 bg-black" />
        </div>
        <Scroller className="mt-[16px] h-[12px]" />
      </div>
      <div className="flex h-[22px] items-center border-t border-[#888] pl-[5px]">
        <span className="flex-1 whitespace-nowrap">756 сторінок у 379 розворо...</span>
        <button aria-label="Розмір сторінки"><Svg w={17} h={12}><path d="M.5 4.500H5.500V10.500H.5ZM5.500 10.500H10.500V4.500L8 1.500H4.500V4M8 2L11 5" /><path d="M14.500 9V11" strokeWidth="2" /></Svg></button>
        <button aria-label="Нова сторінка" className="ml-[11px]"><NewIcon /></button>
        <button aria-label="Вилучити сторінки" className="mr-[10px] ml-[15px]"><TrashIcon /></button>
        <span className="self-end"><Grip /></span>
      </div>
    </section>
  );
}

function WrapPanel() {
  return (
    <section className="bg-[#d6d6d6]">
      <Tabs tabs={["Обтікання текстом", "Матеріал"]} active="Обтікання текстом" />
      <div className="mx-[5px] flex h-[32px] items-center justify-between border-b border-[#aaa] pr-[3px] pl-[4px] text-[#777]">
        {["M0 1.500H13M0 4.500H13M0 7.500H13M0 10.500H13M4 1V11M9 1V11", "M0 .5H13M0 11.500H13M0 3H2M0 5.500H2M0 8H2M11 3H13M11 5.500H13M11 8H13M4.500 3.500H8.500V8.500H4.500Z", "M0 .5H13M0 11.500H13M0 3H3M0 5.500H2M0 8H3M10 3H13M11 5.500H13M10 8H13M4 4H9M3.500 5.500H9.500M4 7H9M5 8.500H8", "M0 .5H13M0 2.500H13M0 9.500H13M0 11.500H13M5 4.500H8M5 6H8M5 7.500H8", "M0 .5H13M0 2.500H13M5 4.500H8M5 6H8M5 7.500H8"].map((d, i) => (
          <button key={i} aria-label={`Обтікання ${i + 1}`}><Svg w={13} h={12}><path d={d} stroke="#909090" strokeWidth="1.300" /></Svg></button>
        ))}
        <label className="relative flex items-center gap-[3px]">
          <input type="checkbox" className="h-[11px] w-[11px] appearance-none border border-[#aaa] bg-[#e0e0e0]" />
          <span className="pointer-events-none absolute top-[6px] left-[2px] h-[2px] w-[7px] bg-[#666]" />
          Інвертувати
        </label>
      </div>
      <div className="flex h-[53px] items-center justify-between pr-[5px] pl-[7px]">
        <Pair>
          <Row><Svg w={13} h={15}><path d="M1 1.500H12M6.500 2V8M4.500 4L6.500 2L8.500 4M3.500 8.500H9.500V13.500H3.500Z" fill="#aaa" /></Svg><span /><Spin label="Зверху" dim /><Field label="Зверху" dim className="w-[51px]" /></Row>
          <Row><Svg w={13} h={15}><path d="M1 13.500H12M6.500 7V13M4.500 11L6.500 13L8.500 11M3.500 1.500H9.500V6.500H3.500Z" fill="#aaa" /></Svg><span /><Spin label="Знизу" dim /><Field label="Знизу" dim className="w-[51px]" /></Row>
        </Pair>
        <button aria-label="Однакові відступи"><Svg w={13} h={14}><path d="M4 6V4Q4 2 6.500 2Q9 2 9 4V6M4 8V10Q4 12 6.500 12Q9 12 9 10V8M0 7H2M11 7H13M1 2.500L2.500 4M12 2.500L10.500 4M1 11.500L2.500 10M12 11.500L10.500 10" stroke="#777" /></Svg></button>
        <Pair>
          <Row><Svg w={14} h={12}><path d="M.5 1V11M1 6H6M3.500 4L1.500 6L3.500 8M7.500 3.500H13V8.500H7.500Z" fill="#aaa" /></Svg><span /><Spin label="Ліворуч" dim /><Field label="Ліворуч" dim className="w-[51px]" /></Row>
          <Row><Svg w={14} h={12}><path d="M13.500 1V11M8 6H13M10.500 4L12.500 6L10.500 8M.5 3.500H6.500V8.500H.5Z" fill="#aaa" /></Svg><span /><Spin label="Праворуч" dim /><Field label="Праворуч" dim className="w-[51px]" /></Row>
        </Pair>
      </div>
    </section>
  );
}

type StyleRow = { name: string; folder?: "open" | "closed"; selected?: boolean; keys?: string };

const paraStyles: StyleRow[] = [
  { name: "Акафіст", folder: "closed" },
  { name: "Повечір’я, північна і часи", folder: "closed" },
  { name: "Канони денні", folder: "open" },
  { name: "текст тропаря" },
  { name: "Коли" },
  { name: "Пісня" },
  { name: "Канон назва" },
  { name: "Ірмос" },
  { name: "Текст тропаря наступний", selected: true },
];

const charStyles: StyleRow[] = [
  { name: "[Немає]", selected: true },
  { name: "! Увага", keys: "Alt+Num 7" },
  { name: "!!! дивись" },
  { name: "Службові", folder: "closed" },
  { name: "Канони денні", folder: "closed" },
  { name: "наголос 2" },
  { name: "цифра дата н.с." },
  { name: "цифра дата ст. ст." },
];

function StyleList({ rows, indent, className, thumb, locked }: { rows: StyleRow[]; indent: string; className: string; thumb: string; locked?: boolean }) {
  return (
    <div className={clsx("flex border-t border-[#777]", className)}>
      <ul className="flex min-w-0 flex-1 flex-col">
        {rows.map((r) => (
          <li key={r.name} className={clsx("flex min-h-0 flex-1 items-center border-b border-[#8c8c8c]", r.selected && "bg-[#b3d4fc] font-bold", r.folder ? "pl-[3px]" : indent)}>
            {r.folder && <><Tri dir={r.folder === "open" ? "down" : "right"} size={9} color="#333" /><span className="w-[4px]" /><FolderIcon /><span className="w-[2px]" /></>}
            <span>{r.name}</span>
            {r.keys && <span className="mr-[22px] ml-auto">{r.keys}</span>}
            {locked && r.selected && <Svg w={11} h={11} className="mr-[5px] ml-auto"><path d="M1 1L10 10M10 1L1 10M2 7L4 9" strokeWidth="1.300" /></Svg>}
          </li>
        ))}
      </ul>
      <Scroller className={thumb} />
    </div>
  );
}

function PanelHead({ text }: { text: string }) {
  return (
    <div className="flex h-[22px] items-center pr-[7px] pl-[5px]">
      <span className="flex-1 whitespace-nowrap">{text}</span>
      <button aria-label="Очистити перевизначення"><Svg w={11} h={11}><path d="M3 .5H.5V10.500H3M8 .5H10.500V10.500H8M3 5.500H8M5.500 3V8" strokeWidth="1.200" /></Svg></button>
      <button aria-label="Швидке застосування" className="ml-[15px]"><Bolt /></button>
    </div>
  );
}

function PanelDock() {
  return (
    <aside className="flex w-[219px] shrink-0 flex-col border-r-2 border-l-[3px] border-[#808080] bg-[#808080] text-[9px] text-[#1a1a1a]">
      <div className="h-[11px] bg-[#929292] pr-[4px] text-right text-[9px] leading-[9px] text-[#444]">››</div>
      <div className="flex flex-col gap-[3px]">
        <PagesPanel />
        <WrapPanel />
        <section className="bg-[#d6d6d6]">
          <Tabs tabs={["Абзац", "Стилі абзацу"]} active="Стилі абзацу" />
          <PanelHead text="Текст тропаря наступний (Канони..." />
          <StyleList rows={paraStyles} indent="pl-[45px]" className="h-[178px]" thumb="mt-[28px] h-[34px]" />
          <div className="flex h-[21px] items-center pl-[5px]">
            <CloudIcon />
            <button aria-label="Нова група" className="ml-auto"><FolderIcon /></button>
            <span className="ml-[11px] text-[10px] text-[#999]">¶⁎</span>
            <button aria-label="Новий стиль" className="ml-[15px]"><NewIcon /></button>
            <button aria-label="Вилучити стиль" className="mr-[10px] ml-[15px]"><TrashIcon /></button>
            <span className="self-end"><Grip /></span>
          </div>
        </section>
        <section className="bg-[#d6d6d6]">
          <Tabs tabs={["Символ", "Стилі символу"]} active="Стилі символу" />
          <PanelHead text="[Немає]" />
          <StyleList rows={charStyles} indent="pl-[31px]" className="h-[158px]" thumb="mt-[4px] h-[58px]" locked />
          <div className="flex h-[22px] items-center pl-[5px]">
            <CloudIcon dim />
            <span className="ml-auto">¶ наголос 2</span>
            <button aria-label="Нова група" className="ml-[13px]"><FolderIcon /></button>
            <button aria-label="Новий стиль" className="ml-[13px]"><NewIcon /></button>
            <button aria-label="Вилучити стиль" className="mr-[19px] ml-[15px]"><TrashIcon dim /></button>
          </div>
        </section>
      </div>
    </aside>
  );
}

export default function App() {
  return (
    <div className="flex h-screen flex-col overflow-hidden bg-[#808080] font-['Open_Sans','Noto_Sans',sans-serif]">
      <MenuBar />
      <ControlBar />
      <div className="flex min-h-0 flex-1">
        <ToolBar />
        <DocumentWindow />
        <PanelDock />
      </div>
    </div>
  );
}
